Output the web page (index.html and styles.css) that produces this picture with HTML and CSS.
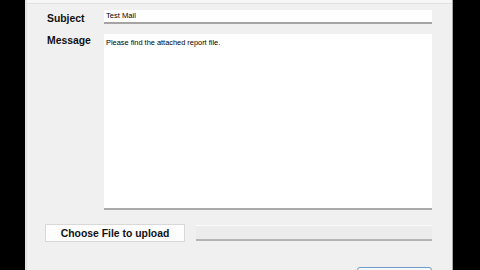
FILE: index.html
```html
<!DOCTYPE html>
<html lang="en">
<head>
    <meta charset="UTF-8">
    <title>Send Mail</title>
    <link rel="stylesheet" href="styles.css">
</head>
<body>

    <div class="window">
        <div class="top-band"></div>

        <!-- subject -->
        <div class="row subject-row">
            <label class="label">Subject</label>
            <div class="textbox">Test Mail</div>
        </div>

        <!-- message -->
        <div class="row message-row">
            <label class="label">Message</label>
            <div class="textarea">Please find the attached report file.</div>
        </div>

        <!-- upload -->
        <div class="row upload-row">
            <button class="btn">Choose File to upload</button>
            <div class="progress"></div>
        </div>

        <div class="row send-row">
            <button class="btn send"></button>
        </div>
    </div>

</body>
</html>
```

FILE: styles.css
```css
html, body {
    margin: 0;
    padding: 0;
    height: 100%;
    overflow: hidden;
}
body {
    background: #000;
    font-family: "Liberation Sans", Arial, sans-serif;
    display: flex;
}
.window {
    margin-left: 25px;
    width: 425px;
    height: 270px;
    overflow: hidden;
    background: #f0f0f0;
    border-left: 2px solid #e4e4e4;
    border-right: 1px solid #a8a8a8;
    display: flex;
    flex-direction: column;
}
.window > div {
    flex-shrink: 0;
}
.top-band {
    height: 3px;
    border-bottom: 1px solid #e2e2e2;
    background: #f6f6f6;
    margin-bottom: 6px;
}
.row {
    display: flex;
    padding-left: 20px;
    padding-right: 20px;
}
.label {
    width: 57px;
    font-size: 10.4px;
    font-weight: bold;
    color: #111;
}
.subject-row .label {
    padding-top: 3px;
}
.textbox {
    flex: 1;
    height: 12px;
    background: #fff;
    border-bottom: 2px solid #a4a4a4;
    font-size: 7.6px;
    line-height: 12px;
    padding-left: 2px;
    color: #000;
}
.message-row {
    margin-top: 10px;
}
.message-row .label {
    padding-top: 1px;
}
.textarea {
    flex: 1;
    height: 166px;
    background: #fff;
    border-bottom: 2px solid #aaa;
    font-size: 7.4px;
    padding: 4px 2px;
    color: #000;
}
.upload-row {
    margin-top: 14px;
    align-items: center;
}
.btn {
    width: 140px;
    height: 18px;
    background: #fdfdfd;
    border: 1px solid #d8d8d8;
    font-family: "Liberation Sans", Arial, sans-serif;
    font-size: 10.4px;
    font-weight: bold;
    color: #111;
    padding: 0;
    margin-left: -2px;
}
.progress {
    flex: 1;
    height: 13px;
    margin-left: 11px;
    background: #ececec;
    border-top: 1px solid #fafafa;
    border-bottom: 2px solid #b4b4b4;
}
.send-row {
    justify-content: flex-end;
    margin-top: 25px;
}
.send {
    width: 75px;
    height: 20px;
    border: 1px solid #6a9ec8;
    border-radius: 3px;
    background: #f4f8fb;
}
```
